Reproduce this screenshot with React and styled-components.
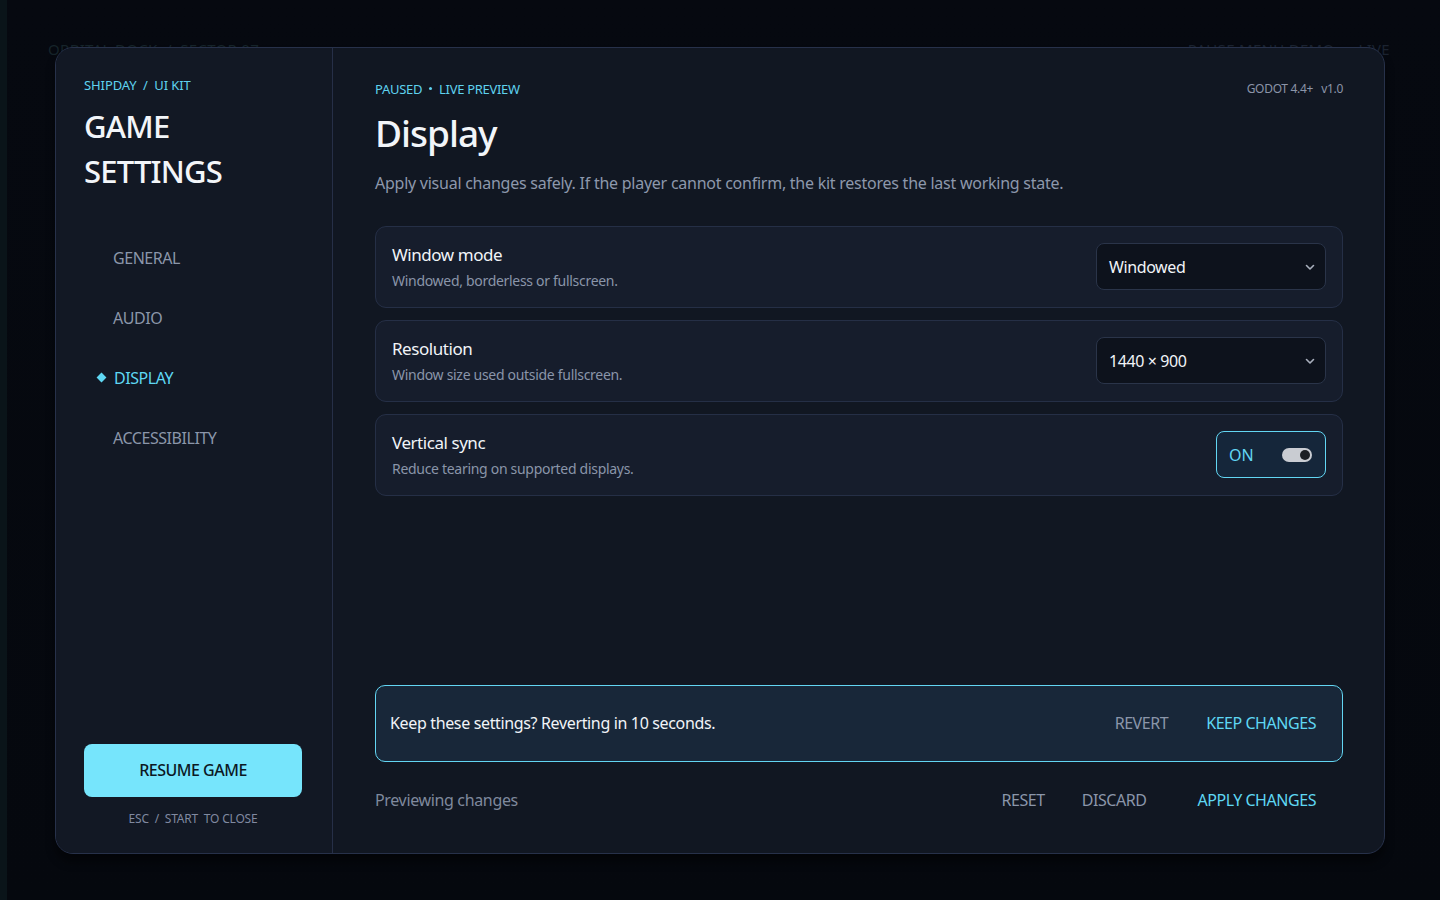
import React from 'react'
import styled, { createGlobalStyle } from 'styled-components'

const GlobalStyle = createGlobalStyle`
  html, body {
    margin: 0;
    padding: 0;
    background: #05080e;
    font-family: "Noto Sans", "Open Sans", sans-serif;
  }
  * { box-sizing: border-box; }
`

const Scene = styled.div`
  position: relative;
  width: 1440px;
  height: 900px;
  overflow: hidden;
  background: linear-gradient(90deg, #0a1419 0 7px, transparent 7px),
    linear-gradient(180deg, #060910 0%, #05080e 100%);
`

const SceneBar = styled.div`
  display: flex;
  justify-content: space-between;
  align-items: center;
  padding: 39px 50px 0 48px;
  font-size: 15px;
  letter-spacing: 0.3px;
  color: #16242a;
`

const SceneRight = styled.div`
  display: flex;
  gap: 24px;
  color: #1b2330;
`

const Overlay = styled.div`
  position: absolute;
  inset: 0;
  display: flex;
  align-items: center;
  justify-content: center;
`

const Panel = styled.div`
  width: 1330px;
  height: 807px;
  display: flex;
  background: #111722;
  border: 1px solid #27314a;
  border-radius: 18px;
  box-shadow: 0 8px 10px rgba(0, 0, 0, 0.45);
  overflow: hidden;
`

const Sidebar = styled.aside`
  width: 277px;
  flex-shrink: 0;
  display: flex;
  flex-direction: column;
  padding: 28px 30px 26px 28px;
  background: #121824;
  border-right: 1px solid #262f47;
`

const Crumb = styled.div`
  font-size: 13px;
  color: #5fd2ef;
  letter-spacing: -0.1px;
`

const Title = styled.h1`
  margin: 10px 0 0;
  font-size: 31px;
  font-weight: 500;
  line-height: 45px;
  color: #f2f5f9;
  letter-spacing: -0.8px;
`

const Nav = styled.nav`
  display: flex;
  flex-direction: column;
  margin-top: 34px;
`

const NavItem = styled.div`
  height: 60px;
  display: flex;
  align-items: center;
  gap: 9px;
  padding-left: ${p => (p.$active ? '14px' : '29px')};
  font-size: 16px;
  letter-spacing: -0.45px;
  color: ${p => (p.$active ? '#5fd7f3' : '#8b96aa')};
`

const Diamond = styled.span`
  width: 7px;
  height: 7px;
  background: #5fd7f3;
  transform: rotate(45deg);
`

const SideFoot = styled.div`
  margin-top: auto;
  display: flex;
  flex-direction: column;
  align-items: center;
  gap: 13px;
`

const ResumeButton = styled.button`
  width: 218px;
  height: 53px;
  border: none;
  border-radius: 8px;
  background: #76e5fc;
  color: #0c1824;
  font-family: inherit;
  font-size: 16px;
  font-weight: 500;
  letter-spacing: -0.5px;
`

const Hint = styled.div`
  font-size: 12px;
  color: #8089a0;
  letter-spacing: -0.2px;
  white-space: pre;
`

const Main = styled.main`
  flex: 1;
  display: flex;
  flex-direction: column;
  padding: 32px 41px 33px 42px;
`

const TopRow = styled.div`
  display: flex;
  justify-content: space-between;
  align-items: center;
`

const Eyebrow = styled.div`
  display: flex;
  align-items: center;
  gap: 7px;
  font-size: 13px;
  letter-spacing: -0.3px;
  color: #5fd2ef;
`

const Dot = styled.span`
  width: 3px;
  height: 3px;
  border-radius: 50%;
  background: #5fd2ef;
`

const Version = styled.div`
  display: flex;
  gap: 8px;
  font-size: 12px;
  letter-spacing: -0.3px;
  color: #8b94a8;
`

const Heading = styled.h2`
  margin: 10px 0 0;
  font-size: 37px;
  font-weight: 500;
  line-height: 50px;
  color: #f2f5f9;
  letter-spacing: -1px;
`

const Lead = styled.p`
  margin: 14px 0 0;
  font-size: 16px;
  letter-spacing: -0.25px;
  color: #8d98ac;
`

const Rows = styled.div`
  display: flex;
  flex-direction: column;
  gap: 12px;
  margin-top: 32px;
`

const Row = styled.div`
  height: 82px;
  display: flex;
  align-items: center;
  justify-content: space-between;
  padding: 0 16px 0 16px;
  background: #161d2c;
  border: 1px solid #252f46;
  border-radius: 11px;
`

const RowText = styled.div`
  display: flex;
  flex-direction: column;
  gap: 5px;
`

const RowTitle = styled.div`
  font-size: 17px;
  color: #f1f4f8;
  letter-spacing: -0.45px;
`

const RowSub = styled.div`
  font-size: 14px;
  letter-spacing: -0.3px;
  color: #8a95a9;
`

const Select = styled.div`
  width: 230px;
  height: 47px;
  display: flex;
  align-items: center;
  justify-content: space-between;
  padding: 0 9px 0 12px;
  background: #0d121c;
  border: 1px solid #2a3449;
  border-radius: 8px;
  font-size: 16px;
  letter-spacing: -0.4px;
  color: #f1f4f8;
`

const Chevron = () => (
  <svg width="12" height="12" viewBox="0 0 12 12" fill="none">
    <path d="M2.5 4.5 L6 8 L9.5 4.5" stroke="#a9b0bd" strokeWidth="1.6" strokeLinecap="round" strokeLinejoin="round" />
  </svg>
)

const ToggleBox = styled.div`
  width: 110px;
  height: 47px;
  display: flex;
  align-items: center;
  justify-content: space-between;
  padding: 0 13px 0 12px;
  background: #15263a;
  border: 1px solid #62d6f3;
  border-radius: 8px;
  font-size: 16px;
  color: #62d6f3;
`

const Switch = styled.div`
  width: 30px;
  height: 14px;
  display: flex;
  align-items: center;
  justify-content: flex-end;
  padding: 0 2px;
  border-radius: 7px;
  background: #c9ccd2;
`

const Knob = styled.span`
  width: 10px;
  height: 10px;
  border-radius: 50%;
  background: #1c1f24;
`

const Spacer = styled.div`
  flex: 1;
`

const Confirm = styled.div`
  height: 77px;
  display: flex;
  align-items: center;
  justify-content: space-between;
  padding: 0 26px 0 14px;
  background: #182739;
  border: 1px solid #63d6f3;
  border-radius: 10px;
`

const ConfirmText = styled.div`
  font-size: 16px;
  color: #f1f4f8;
  letter-spacing: -0.35px;
`

const Actions = styled.div`
  display: flex;
  align-items: center;
  gap: ${p => p.$gap || 38}px;
`

const TextButton = styled.button`
  padding: 0;
  border: none;
  background: none;
  font-family: inherit;
  font-size: 16px;
  letter-spacing: -0.45px;
  color: ${p => (p.$primary ? '#5fd7f3' : '#8b96aa')};
  margin-left: ${p => p.$push || 0}px;
`

const Footer = styled.div`
  height: 40px;
  margin-top: 18px;
  display: flex;
  align-items: center;
  justify-content: space-between;
  padding-right: 27px;
`

const FooterNote = styled.div`
  font-size: 16px;
  letter-spacing: -0.35px;
  color: #7f899d;
`

const navItems = ['GENERAL', 'AUDIO', 'DISPLAY', 'ACCESSIBILITY']

const rows = [
  { title: 'Window mode', sub: 'Windowed, borderless or fullscreen.', value: 'Windowed' },
  { title: 'Resolution', sub: 'Window size used outside fullscreen.', value: '1440 × 900' },
]

export default function App () {
  return (
    <>
      <GlobalStyle />
      <Scene>
        <SceneBar>
          <span>ORBITAL DOCK&nbsp; /&nbsp; SECTOR 07</span>
          <SceneRight>
            <span>PAUSE MENU DEMO</span>
            <span>LIVE</span>
          </SceneRight>
        </SceneBar>

        <Overlay>
          <Panel>
            <Sidebar>
              <Crumb>SHIPDAY&nbsp; /&nbsp; UI KIT</Crumb>
              <Title>GAME<br />SETTINGS</Title>
              <Nav>
                {navItems.map(item => (
                  <NavItem key={item} $active={item === 'DISPLAY'}>
                    {item === 'DISPLAY' && <Diamond />}
                    {item}
                  </NavItem>
                ))}
              </Nav>
              <SideFoot>
                <ResumeButton>RESUME GAME</ResumeButton>
                <Hint>{'ESC  /  START  TO CLOSE'}</Hint>
              </SideFoot>
            </Sidebar>

            <Main>
              <TopRow>
                <Eyebrow>PAUSED <Dot /> LIVE PREVIEW</Eyebrow>
                <Version><span>GODOT 4.4+</span><span>v1.0</span></Version>
              </TopRow>
              <Heading>Display</Heading>
              <Lead>Apply visual changes safely. If the player cannot confirm, the kit restores the last working state.</Lead>

              <Rows>
                {rows.map(r => (
                  <Row key={r.title}>
                    <RowText>
                      <RowTitle>{r.title}</RowTitle>
                      <RowSub>{r.sub}</RowSub>
                    </RowText>
                    <Select>
                      {r.value}
                      <Chevron />
                    </Select>
                  </Row>
                ))}
                <Row>
                  <RowText>
                    <RowTitle>Vertical sync</RowTitle>
                    <RowSub>Reduce tearing on supported displays.</RowSub>
                  </RowText>
                  <ToggleBox>
                    ON
                    <Switch><Knob /></Switch>
                  </ToggleBox>
                </Row>
              </Rows>

              <Spacer />

              <Confirm>
                <ConfirmText>Keep these settings? Reverting in 10 seconds.</ConfirmText>
                <Actions $gap={38}>
                  <TextButton>REVERT</TextButton>
                  <TextButton $primary>KEEP CHANGES</TextButton>
                </Actions>
              </Confirm>

              <Footer>
                <FooterNote>Previewing changes</FooterNote>
                <Actions $gap={37}>
                  <TextButton>RESET</TextButton>
                  <TextButton>DISCARD</TextButton>
                  <TextButton $primary $push={14}>APPLY CHANGES</TextButton>
                </Actions>
              </Footer>
            </Main>
          </Panel>
        </Overlay>
      </Scene>
    </>
  )
}
